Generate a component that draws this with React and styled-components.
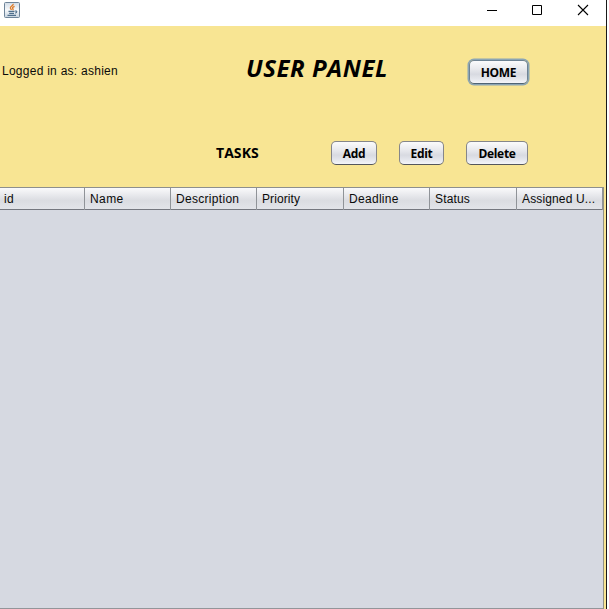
import React from "react";
import styled, { createGlobalStyle, css } from "styled-components";

const GlobalStyle = createGlobalStyle`
  * { box-sizing: border-box; }
  body { margin: 0; background: #fff; overflow: hidden; }
`;

const Window = styled.div`
  display: flex;
  flex-direction: column;
  width: 607px;
  height: 609px;
  border-right: 1px solid #191919;
  background: #f8e593;
  color: #0a0a0a;
  font: 12px "Liberation Sans", Arial, sans-serif;
  white-space: nowrap;
`;

const TitleBar = styled.header`
  display: flex;
  flex: none;
  justify-content: space-between;
  height: 26px;
  padding: 2px 0 0 4px;
  background: #fff;
`;

const WindowControls = styled.div`
  display: flex;
  gap: 34px;
  padding: 2px 17px 0 0;
`;

const ControlIcon = styled.svg`
  display: block;
  width: 12px;
  height: 12px;
  fill: none;
  stroke: #000;
`;

const HeaderRow = styled.div`
  display: grid;
  grid-template-columns: 246px 222px 61px;
  flex: none;
  align-items: center;
  height: 92px;
`;

const UserLabel = styled.span`
  padding: 0 0 2px 2px;
  font-size: 12px;
  letter-spacing: 0.26px;
  line-height: 16px;
`;

const Title = styled.h1`
  margin: 0;
  padding-bottom: 8px;
  font: italic 700 24px/32px "Open Sans", "Noto Sans", sans-serif;
  letter-spacing: 0.55px;
  color: #000;
`;

const TaskBar = styled.div`
  display: grid;
  grid-template-columns: 115px 46px 22px 45px 22px 62px;
  flex: none;
  align-items: center;
  height: 69px;
  padding-left: 216px;
`;

const SectionTitle = styled.h2`
  margin: 0;
  font: 700 14px/20px "Open Sans", "Noto Sans", sans-serif;
  letter-spacing: 0.05px;
  color: #000;
`;

const Button = styled.button`
  grid-column: ${(p) => p.$column};
  height: 24px;
  padding: 2px 0 0;
  border: 1px solid #85868a;
  border-bottom-color: #55575c;
  border-radius: 5px;
  background: linear-gradient(#fbfbfc 0%, #e9eaee 35%, #d8dae1 60%, #e4e6ec 80%, #f4f5f9 100%);
  color: #000;
  font: 700 12px/20px "Open Sans", "Noto Sans", sans-serif;
  letter-spacing: -0.3px;
  ${(p) =>
    p.$focused &&
    css`
      margin: 0 1px;
      border-color: #6e8394;
      border-bottom-color: #4f6475;
      box-shadow: 0 0 0 1.5px #8ba5b5;
    `}
`;

const TablePane = styled.main`
  display: flex;
  flex-direction: column;
  flex: 1;
  width: 604px;
  border-top: 1px solid #8d8f8d;
  border-right: 1px solid #929487;
  border-bottom: 1px solid #939599;
  background: #d6d9e1;
`;

const TableHead = styled.div`
  display: grid;
  grid-template-columns: 85px 86px 86px 87px 86px 87px 86px;
  flex: none;
  height: 22px;
  border-bottom: 1px solid #74777f;
  background: linear-gradient(#fafafb 0%, #e7e8ec 35%, #dadce1 60%, #e2e4e9 100%);
`;

const HeadCell = styled.div`
  padding-left: ${(p) => p.$inset || 5}px;
  border-right: 1px solid #8f9398;
  font-size: 12px;
  letter-spacing: ${(p) => p.$tracking ?? 0.3}px;
  line-height: 22px;
`;

const columns = [
  { label: "id", inset: 4 },
  { label: "Name", tracking: 0.4 },
  { label: "Description" },
  { label: "Priority", tracking: 0.08 },
  { label: "Deadline" },
  { label: "Status", tracking: 0.15 },
  { label: "Assigned U...", tracking: 0.14 },
];

function JavaIcon() {
  return (
    <svg width="16" height="16" viewBox="0 0 16 16" fill="none">
      <defs>
        <linearGradient id="tile" x1="0" y1="0" x2="0" y2="1">
          <stop offset="0" stopColor="#d2dce6" />
          <stop offset="0.5" stopColor="#f7f9fb" />
          <stop offset="1" stopColor="#c5d2de" />
        </linearGradient>
      </defs>
      <rect x="0.5" y="0.5" width="15" height="15" rx="1" fill="url(#tile)" stroke="#6e8499" />
      <path d="M9.2 1.8C9.6 3.8 5.8 4.3 6.4 6.2C6.6 7 7.3 7.3 7.4 8M10.6 4.4C8.3 5.3 8.1 6.1 9 7C9.3 7.4 9 7.8 8.6 8.1" stroke="#df7d2b" strokeWidth="1.4" />
      <path d="M4.5 9.4H10.5M5.2 11.4H10M11 9.1C13.3 8.5 13.5 10.5 11.2 11.1M3.5 13.4H12" stroke="#4f6f8c" strokeWidth="1.1" />
    </svg>
  );
}

export default function App() {
  return (
    <>
      <GlobalStyle />
      <Window>
        <TitleBar>
          <JavaIcon />
          <WindowControls>
            <ControlIcon viewBox="0 0 12 12"><path d="M2 6.5H12" /></ControlIcon>
            <ControlIcon viewBox="0 0 12 12"><path d="M1.5 1.5H10.5V10.5H1.5Z" /></ControlIcon>
            <ControlIcon viewBox="0 0 12 12"><path d="M1 1L11 11M11 1L1 11" strokeWidth="1.1" /></ControlIcon>
          </WindowControls>
        </TitleBar>
        <HeaderRow>
          <UserLabel>Logged in as: ashien</UserLabel>
          <Title>USER PANEL</Title>
          <Button $focused>HOME</Button>
        </HeaderRow>
        <TaskBar>
          <SectionTitle>TASKS</SectionTitle>
          <Button $column={2}>Add</Button>
          <Button $column={4}>Edit</Button>
          <Button $column={6}>Delete</Button>
        </TaskBar>
        <TablePane>
          <TableHead>
            {columns.map((c) => (
              <HeadCell key={c.label} $inset={c.inset} $tracking={c.tracking}>{c.label}</HeadCell>
            ))}
          </TableHead>
        </TablePane>
      </Window>
    </>
  );
}
